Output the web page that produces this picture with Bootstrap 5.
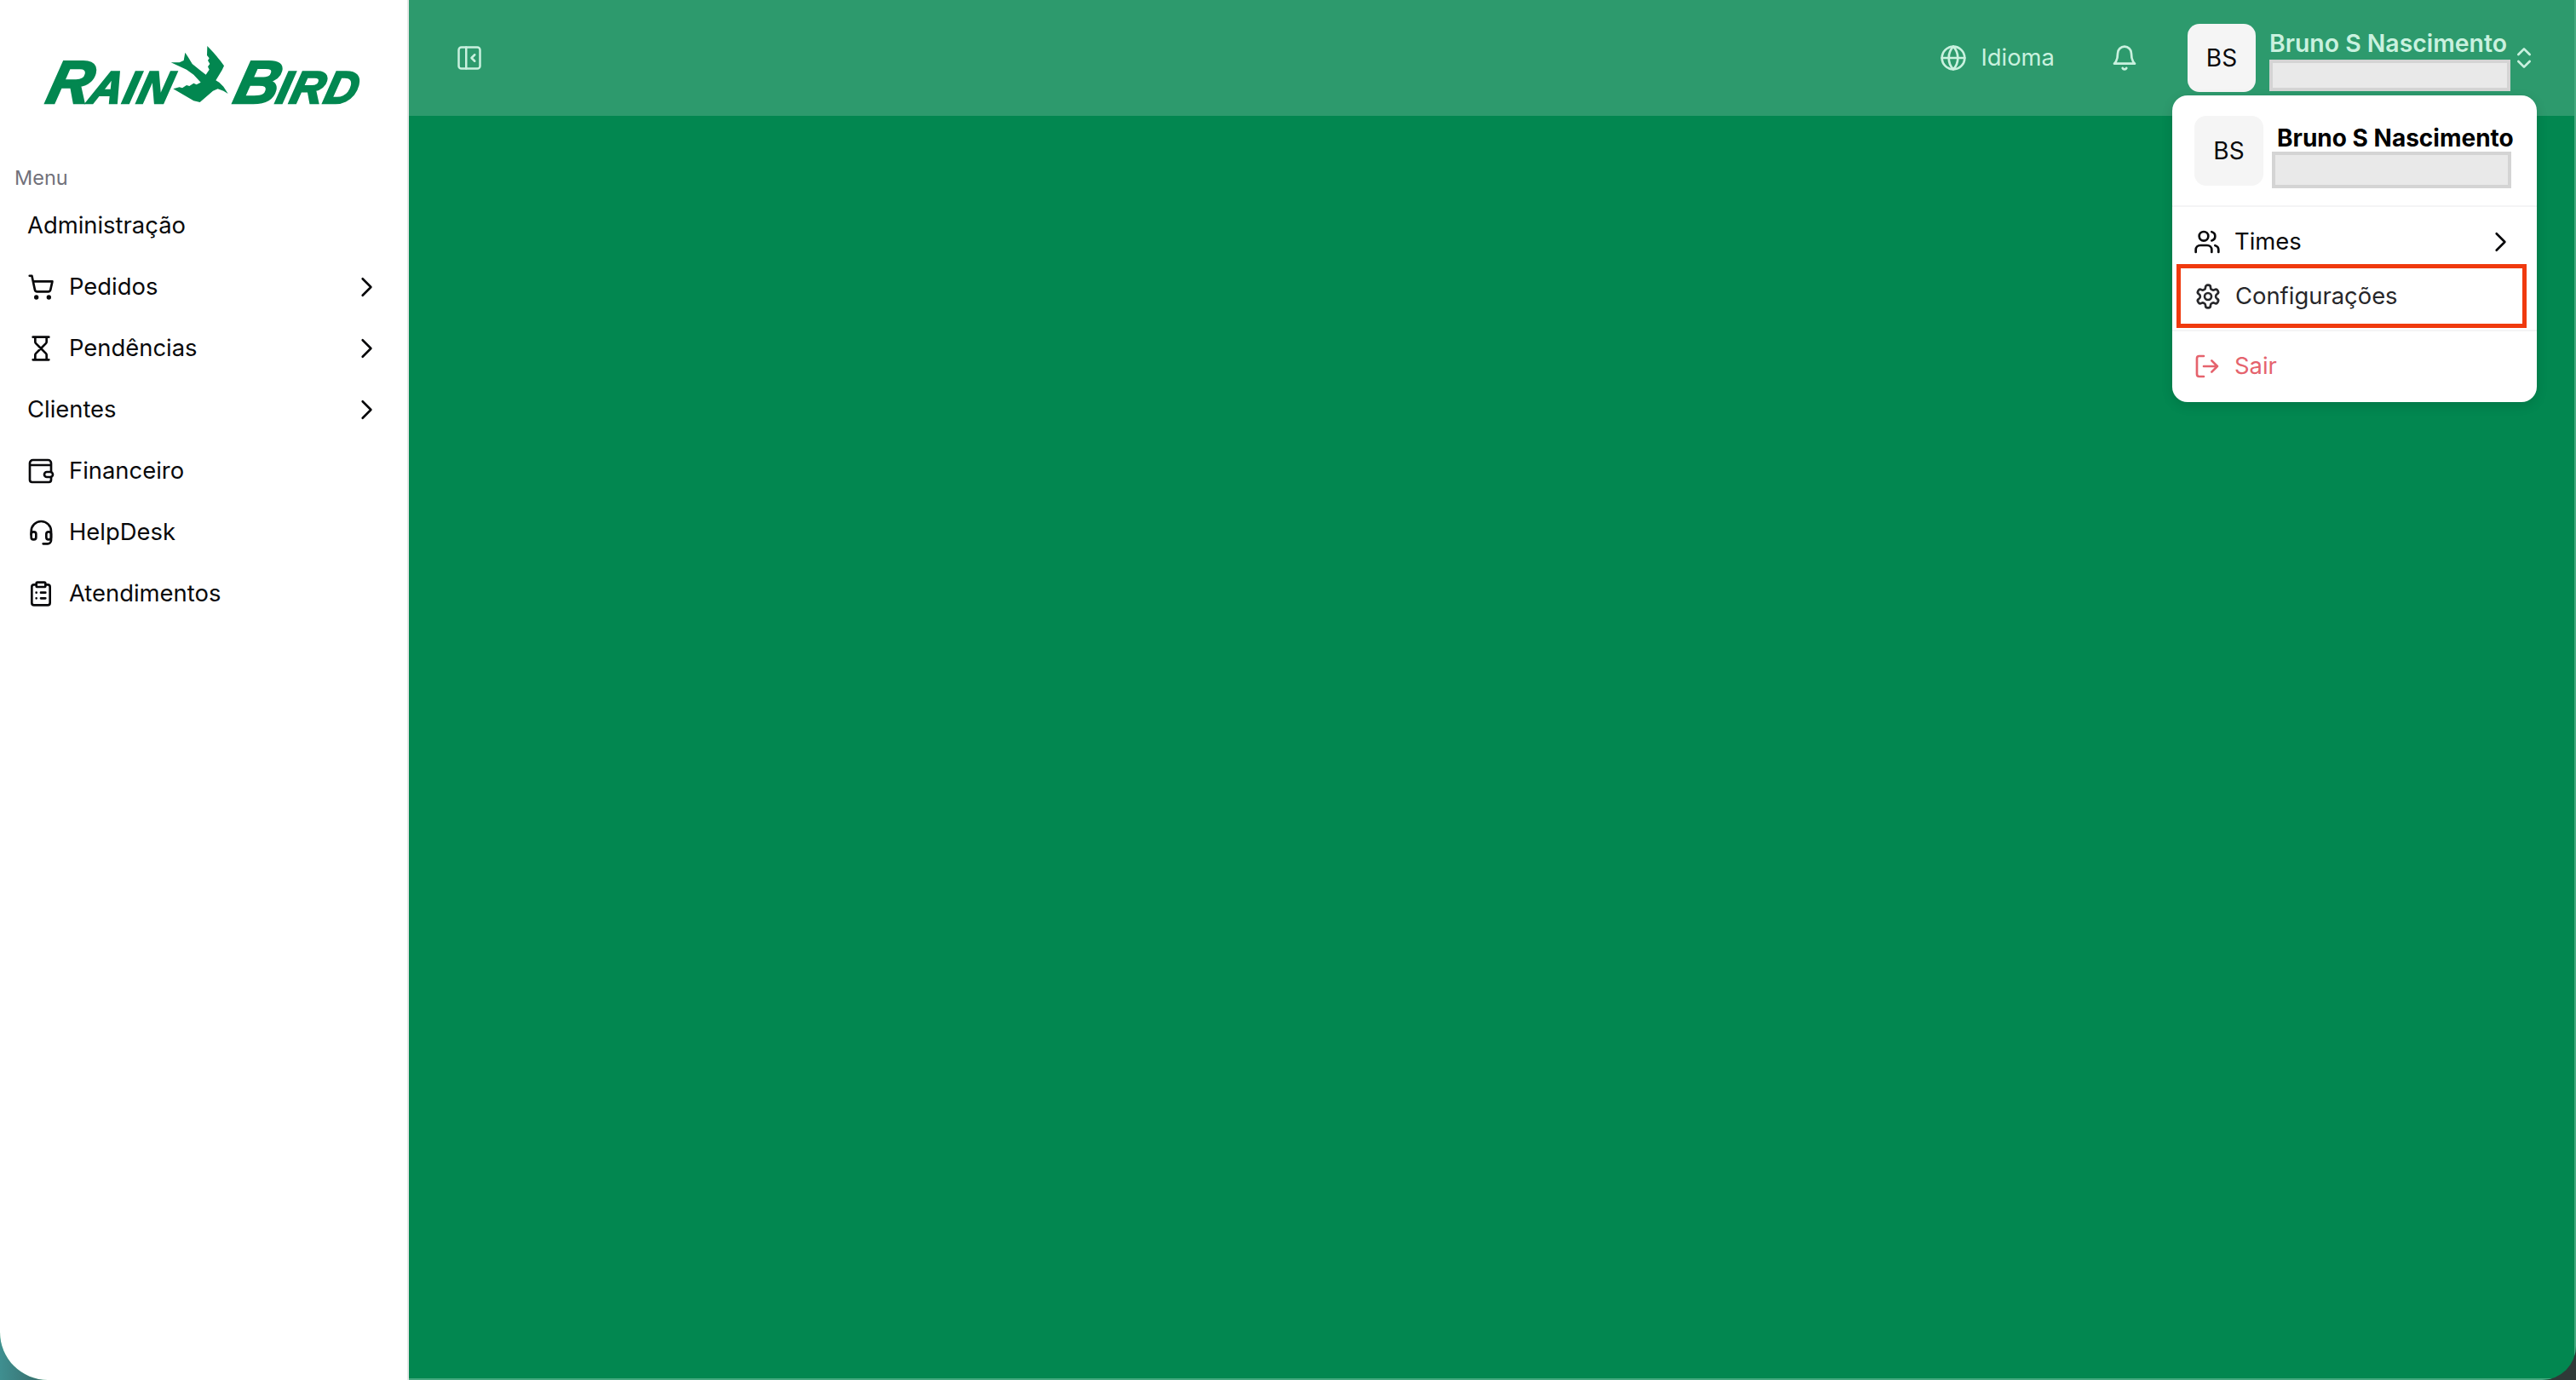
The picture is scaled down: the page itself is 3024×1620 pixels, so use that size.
<!doctype html>
<html lang="pt-BR">
<head>
<meta charset="utf-8">
<title>Rain Bird</title>
<link rel="stylesheet" href="https://cdn.jsdelivr.net/npm/bootstrap@5.3.0/dist/css/bootstrap.min.css">
<style>
html,body{height:100%}
body{margin:0;background:linear-gradient(90deg,#3f8f90 0,#2f3a38 4%,#2f3a38 100%);font-family:Inter,"Liberation Sans",sans-serif;overflow:hidden}
.app-shell{height:1620px;width:3024px;border-radius:0 0 40px 56px;overflow:hidden;background:#028750;position:relative}
.side-col{width:480px;flex:0 0 480px;background:#fff;border-right:2px solid #e6e8e7}
.logo-wrap{height:136px;padding:0 0 14px 0;color:#028750}
.logo-text{font-family:"Liberation Sans",sans-serif;font-weight:700;font-style:italic;display:inline-block;transform:skewX(-14deg);line-height:51px;height:51px;-webkit-text-stroke:2.5px #028750;white-space:nowrap;font-size:53px;color:#028750}
.logo-text b{font-size:71px;font-weight:700;letter-spacing:-1px}
.logo-bird{width:85px;height:85px;margin:0 -9px -8px -12px;flex:none}
.logo-rain{margin-left:58px;letter-spacing:2px}
.logo-word{letter-spacing:1.500px;margin-left:8px}
.menu-title{font-size:23.500px;line-height:32px;color:#71717a;padding:57px 0 4px 17px;margin-top:0}
.menu-row{height:72px;padding:0 45px 0 32px;font-size:27.400px;color:#09090b;display:flex;align-items:center;text-decoration:none}
.menu-ico{width:32px;height:32px;margin-right:17px;flex:none;stroke-width:2}
.ico{fill:none;stroke:currentColor;stroke-width:2;stroke-linecap:round;stroke-linejoin:round}
.chev{width:26px;height:26px;margin-right:-10px;stroke-width:2.400}
.top-bar{height:136px;background:#2d9a6d;padding:0 43px 0 56px;color:#c9f1df}
.main-col{border-right:2px solid #45a97f;border-bottom:2px solid #45a97f}
.bar-collapse{width:30px;height:30px}
.bar-lang{font-size:27.400px;color:#c9f1df;margin-right:66px}
.bar-ico{width:32px;height:32px}
.user-av{width:80px;height:80px;border-radius:14px;background:#f5f5f5;color:#09090b;font-size:28px;flex:none;margin-left:58px}
.bar-name{font-size:28.400px;line-height:34px;font-weight:600;color:#c9f1df;white-space:nowrap;margin-top:4px}
.mask-box{background:#e9e9e9;border:4px solid #d4d4d4;display:block}
.bar-mask{width:283px;height:37px;margin-top:2px}
.pop-mask{width:281px;height:43px;margin-left:-6px}
.pop-menu{position:absolute;left:2550px;top:112px;width:428px;height:360px;background:#fff;border-radius:18px;box-shadow:0 4px 14px rgba(0,0,0,.12);color:#09090b;font-size:27.400px;padding:0}
.pop-head{height:131px;border-bottom:2px solid #f4f4f5;padding:24px 0 0 26px}
.pop-av{width:81px;height:82px;border-radius:14px;background:#f5f5f5;font-size:28px;flex:none}
.pop-name{font-size:28px;line-height:32px;font-weight:700;color:#000;white-space:nowrap;margin-top:10px}
.pop-row{display:flex;align-items:center;padding:0 36px 0 25px;text-decoration:none;color:#09090b}
.pop-ico{width:32px;height:32px;margin-right:16px;flex:none}
.row-times{height:52px;margin-top:15px}
.row-times .chev{margin-right:-6px}
.row-config{margin:0 12px 0 5px;height:75px;border:5px solid #f03a0e;padding:0 0 0 16px;color:#27272a}
.row-exit{height:84px;color:#e5636d;border-top:2px solid #f4f4f5;margin-top:2px}
</style>
</head>
<body>
<div class="app-shell d-flex">
  <aside class="side-col d-flex flex-column">
    <div class="logo-wrap d-flex align-items-end">
      <span class="logo-text logo-rain"><b>R</b>AIN</span>
      <svg class="logo-bird" viewBox="0 0 255 255" aria-hidden="true"><path fill="#028750" d="M148 27L170 50L195 80L207 97L200 112L178 148L190 155L205 170L221 195L205 185L185 178L168 185L122 225L100 220L28 178L50 172L60 175L75 165L85 168L100 158L110 163L125 155L100 128L75 110L20 85L50 85L65 78L70 50L80 65L95 90L120 110L143 128L155 110L150 100L157 90L150 78L155 70L147 60Z"/></svg>
      <span class="logo-text logo-word"><b>B</b>IRD</span>
    </div>
    <div class="menu-title">Menu</div>
    <a class="menu-row" href="#">Administração</a>
    <a class="menu-row" href="#">
      <svg class="menu-ico ico" viewBox="0 0 24 24"><circle cx="8" cy="21" r="1"/><circle cx="19" cy="21" r="1"/><path d="M2.05 2.05h2l2.66 12.42a2 2 0 0 0 2 1.58h9.78a2 2 0 0 0 1.95-1.57l1.65-7.43H5.12"/></svg>
      <span class="flex-grow-1">Pedidos</span>
      <svg class="chev ico" viewBox="0 0 24 24"><path d="m8 3 9 9-9 9"/></svg>
    </a>
    <a class="menu-row" href="#">
      <svg class="menu-ico ico" viewBox="0 0 24 24"><path d="M5 22h14M5 2h14M17 22v-4.172a2 2 0 0 0-.586-1.414L12 12l-4.414 4.414A2 2 0 0 0 7 17.828V22M7 2v4.172a2 2 0 0 0 .586 1.414L12 12l4.414-4.414A2 2 0 0 0 17 6.172V2"/></svg>
      <span class="flex-grow-1">Pendências</span>
      <svg class="chev ico" viewBox="0 0 24 24"><path d="m8 3 9 9-9 9"/></svg>
    </a>
    <a class="menu-row" href="#">
      <span class="flex-grow-1">Clientes</span>
      <svg class="chev ico" viewBox="0 0 24 24"><path d="m8 3 9 9-9 9"/></svg>
    </a>
    <a class="menu-row" href="#">
      <svg class="menu-ico ico" viewBox="0 0 24 24"><path d="M21 12.750V5a2.750 2.750 0 0 0-2.750-2.750H5A2.750 2.750 0 0 0 2.250 5v14.750a2 2 0 0 0 2 2H19a2 2 0 0 0 2-2v-2.500M2.250 6.750H21"/><rect x="15" y="12.750" width="7.500" height="4.500" rx="2.250"/></svg>
      <span class="flex-grow-1">Financeiro</span>
    </a>
    <a class="menu-row" href="#">
      <svg class="menu-ico ico" viewBox="0 0 24 24"><path d="M3.500 14v-3a8.750 8.750 0 0 1 17.500 0v8a3 3 0 0 1-3 3h-4"/><rect x="3.500" y="11.500" width="4.250" height="6.750" rx="2"/><rect x="16.750" y="11.500" width="4.250" height="6.750" rx="2"/></svg>
      <span class="flex-grow-1">HelpDesk</span>
    </a>
    <a class="menu-row" href="#">
      <svg class="menu-ico ico" viewBox="0 0 24 24"><rect x="8" y="2" width="8" height="4" rx="1"/><path d="M16 4h2a2 2 0 0 1 2 2v14a2 2 0 0 1-2 2H6a2 2 0 0 1-2-2V6a2 2 0 0 1 2-2h2M12 11h4M12 16h4M8 11h.01M8 16h.01"/></svg>
      <span class="flex-grow-1">Atendimentos</span>
    </a>
  </aside>
  <main class="main-col flex-grow-1 d-flex flex-column">
    <header class="top-bar d-flex align-items-center">
      <svg class="bar-collapse ico" viewBox="0 0 24 24"><rect x="2" y="2" width="20" height="20" rx="2.500"/><path d="M9 2v20M17 9l-3 3 3 3"/></svg>
      <div class="ms-auto d-flex align-items-center">
        <div class="bar-lang d-flex align-items-center">
          <svg class="bar-ico me-3 ico" viewBox="0 0 24 24"><circle cx="12" cy="12" r="10"/><path d="M12 2a14.500 14.500 0 0 0 0 20 14.500 14.500 0 0 0 0-20M2 12h20"/></svg>
          Idioma
        </div>
        <svg class="bar-ico ico" viewBox="0 0 24 24"><path d="M6 8a6 6 0 0 1 12 0c0 7 3 9 3 9H3s3-2 3-9M10.300 21a1.940 1.940 0 0 0 3.400 0"/></svg>
        <div class="user-av d-flex align-items-center justify-content-center">BS</div>
        <div class="ms-3">
          <div class="bar-name">Bruno S Nascimento</div>
          <span class="mask-box bar-mask"></span>
        </div>
        <svg class="bar-ico ico" viewBox="0 0 24 24"><path d="m7 15 5 5 5-5M7 9l5-5 5 5"/></svg>
      </div>
    </header>
  </main>
  <div class="pop-menu">
    <div class="pop-head d-flex">
      <div class="pop-av d-flex align-items-center justify-content-center">BS</div>
      <div class="ms-3">
        <div class="pop-name">Bruno S Nascimento</div>
        <span class="mask-box pop-mask"></span>
      </div>
    </div>
    <a class="pop-row row-times" href="#">
      <svg class="pop-ico ico" viewBox="0 0 24 24"><path d="M16 21v-2a4 4 0 0 0-4-4H6a4 4 0 0 0-4 4v2"/><circle cx="9" cy="7" r="4"/><path d="M22 21v-2a4 4 0 0 0-3-3.870M16 3.130a4 4 0 0 1 0 7.750"/></svg>
      <span class="flex-grow-1">Times</span>
      <svg class="chev ico" viewBox="0 0 24 24"><path d="m8 3 9 9-9 9"/></svg>
    </a>
    <a class="pop-row row-config" href="#">
      <svg class="pop-ico ico" viewBox="0 0 24 24"><path d="M12.220 2h-.44a2 2 0 0 0-2 2v.18a2 2 0 0 1-1 1.730l-.43.25a2 2 0 0 1-2 0l-.15-.08a2 2 0 0 0-2.730.73l-.22.38a2 2 0 0 0 .73 2.730l.15.1a2 2 0 0 1 1 1.720v.51a2 2 0 0 1-1 1.740l-.15.09a2 2 0 0 0-.73 2.730l.22.38a2 2 0 0 0 2.730.73l.15-.08a2 2 0 0 1 2 0l.43.25a2 2 0 0 1 1 1.730V20a2 2 0 0 0 2 2h.44a2 2 0 0 0 2-2v-.18a2 2 0 0 1 1-1.730l.43-.25a2 2 0 0 1 2 0l.15.08a2 2 0 0 0 2.730-.73l.22-.39a2 2 0 0 0-.73-2.730l-.15-.08a2 2 0 0 1-1-1.740v-.5a2 2 0 0 1 1-1.740l.15-.09a2 2 0 0 0 .73-2.730l-.22-.38a2 2 0 0 0-2.730-.73l-.15.08a2 2 0 0 1-2 0l-.43-.25a2 2 0 0 1-1-1.730V4a2 2 0 0 0-2-2z"/><circle cx="12" cy="12" r="3"/></svg>
      <span>Configurações</span>
    </a>
    <a class="pop-row row-exit" href="#">
      <svg class="pop-ico ico" viewBox="0 0 24 24"><path d="M9 21H5a2 2 0 0 1-2-2V5a2 2 0 0 1 2-2h4M16 17l5-5-5-5M21 12H9"/></svg>
      <span>Sair</span>
    </a>
  </div>
</div>
</body>
</html>
